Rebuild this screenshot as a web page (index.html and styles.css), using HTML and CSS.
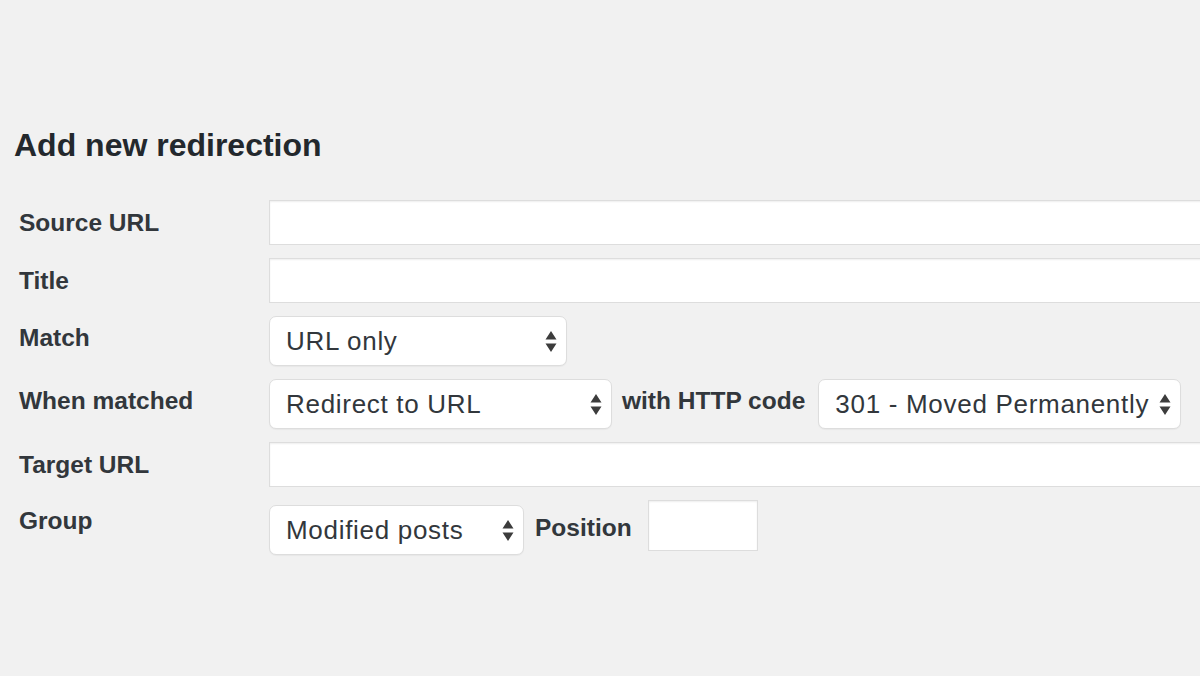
FILE: index.html
```html
<!DOCTYPE html>
<html lang="en">
<head>
    <meta charset="UTF-8">
    <meta name="viewport" content="width=device-width, initial-scale=1.0">
    <title>Add new redirection</title>
    <link rel="stylesheet" href="styles.css">
</head>
<body>
    <section class="add-new">
        <h2 class="title">Add new redirection</h2>
        <div class="form-table">
            <label class="row-label" for="source">Source URL</label>
            <div class="field">
                <input type="text" id="source" class="text-input wide">
            </div>

            <label class="row-label" for="title">Title</label>
            <div class="field">
                <input type="text" id="title" class="text-input wide">
            </div>

            <span class="row-label raised">Match</span>
            <div class="field">
                <div class="select select-match">
                    <span>URL only</span>
                    <svg class="arrows" viewBox="0 0 12 21" width="12" height="21"><path d="M6 0 L11.5 8.5 H0.5 Z M6 21 L11.5 12.5 H0.5 Z"/></svg>
                </div>
            </div>

            <span class="row-label raised">When matched</span>
            <div class="field">
                <div class="select select-action">
                    <span>Redirect to URL</span>
                    <svg class="arrows" viewBox="0 0 12 21" width="12" height="21"><path d="M6 0 L11.5 8.5 H0.5 Z M6 21 L11.5 12.5 H0.5 Z"/></svg>
                </div>
                <span class="inline-label">with HTTP code</span>
                <div class="select select-code">
                    <span>301 - Moved Permanently</span>
                    <svg class="arrows" viewBox="0 0 12 21" width="12" height="21"><path d="M6 0 L11.5 8.5 H0.5 Z M6 21 L11.5 12.5 H0.5 Z"/></svg>
                </div>
            </div>

            <label class="row-label" for="target">Target URL</label>
            <div class="field">
                <input type="text" id="target" class="text-input wide">
            </div>

            <span class="row-label last">Group</span>
            <div class="field last-field">
                <div class="select select-group">
                    <span>Modified posts</span>
                    <svg class="arrows" viewBox="0 0 12 21" width="12" height="21"><path d="M6 0 L11.5 8.5 H0.5 Z M6 21 L11.5 12.5 H0.5 Z"/></svg>
                </div>
                <span class="inline-label position-label">Position</span>
                <input type="text" class="text-input position">
            </div>
        </div>
    </section>
</body>
</html>
```

FILE: styles.css
```css
* {
    margin: 0;
    padding: 0;
    box-sizing: border-box;
    font-family: 'Liberation Sans', Arial, sans-serif;
}

body {
    background-color: #f1f1f1;
    overflow: hidden;
    width: 1200px;
    height: 676px;
}

.add-new {
    padding: 125px 0 0 14px;
}

.title {
    font-size: 32px;
    font-weight: 700;
    color: #23282d;
    line-height: 40px;
    margin-bottom: 35px;
}

/* form rows */

.form-table {
    display: grid;
    grid-template-columns: 255px 1fr;
    row-gap: 13px;
}

.row-label {
    align-self: center;
    padding-left: 5px;
    font-size: 24.5px;
    font-weight: 700;
    color: #32373c;
}

.row-label.raised {
    margin-bottom: 6px;
}

.row-label.last {
    align-self: start;
    padding-top: 7px;
}

.field {
    display: flex;
    align-items: center;
}

.last-field {
    align-items: flex-start;
}

.text-input {
    height: 45px;
    background-color: #fff;
    border: 1px solid #ddd;
    box-shadow: inset 0 1px 2px rgba(0, 0, 0, .07);
    font-size: 22px;
}

.wide {
    width: 1000px;
}

.select {
    display: flex;
    align-items: center;
    justify-content: space-between;
    height: 50px;
    padding: 0 9px 0 16px;
    background-color: #fff;
    border: 1px solid #ddd;
    border-radius: 7px;
    box-shadow: 0 1px 1px rgba(0, 0, 0, .04);
    font-family: Inter, 'Liberation Sans', sans-serif;
    font-size: 26px;
    letter-spacing: .7px;
    color: #32373c;
}

.arrows {
    fill: #3c3c3c;
    flex-shrink: 0;
}

.select-match {
    width: 298px;
}

.select-action {
    width: 343px;
}

.select-code {
    width: 363px;
}

.select-group {
    width: 255px;
    margin-top: 5px;
}

.inline-label {
    font-size: 24.5px;
    font-weight: 700;
    color: #32373c;
    margin: 0 13px 6px 10px;
}

.position-label {
    margin: 14px 16px 0 11px;
}

.position {
    width: 110px;
    height: 51px;
}
```
